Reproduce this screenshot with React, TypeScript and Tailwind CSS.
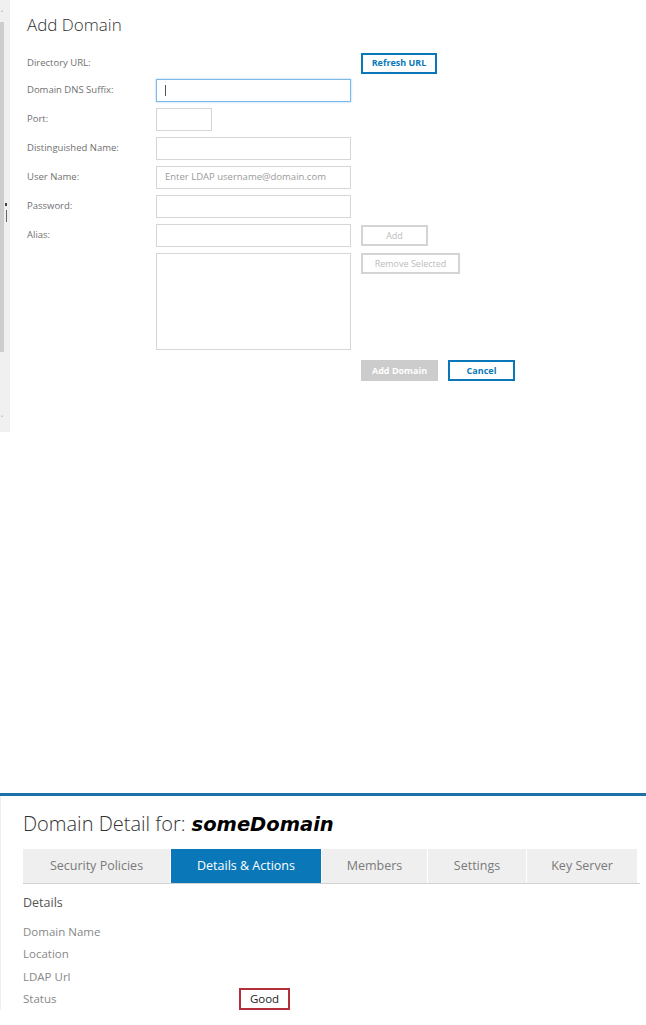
import React from "react";

const font = { fontFamily: "'Open Sans', Lato, sans-serif" };

const FormRow = ({
  label,
  children,
  extra,
}: {
  label: string;
  children?: React.ReactNode;
  extra?: React.ReactNode;
}) => (
  <div className="flex h-[23px] items-center">
    <div className="w-[129px] text-[9.5px] text-[#707070]">{label}</div>
    <div className="w-[195px]">{children}</div>
    {extra && <div className="ml-[10px]">{extra}</div>}
  </div>
);

const Input = ({
  className = "",
  placeholder,
  focused,
}: {
  className?: string;
  placeholder?: string;
  focused?: boolean;
}) => (
  <div
    className={`flex h-[23px] items-center border px-[8px] text-[9.5px] ${
      focused ? "border-[#7db9e8] shadow-[0_0_2px_#9cc9ee]" : "border-[#d6d6d6]"
    } ${className}`}
  >
    {focused && <span className="h-[11px] w-px bg-[#555]" />}
    {placeholder && <span className="text-[#9a9a9a]">{placeholder}</span>}
  </div>
);

const GhostButton = ({ children, w }: { children: React.ReactNode; w: string }) => (
  <div
    className={`flex h-[21px] items-center justify-center border-2 border-[#d4d4d4] text-[9px] text-[#bdbdbd] ${w}`}
  >
    {children}
  </div>
);

const BlueButton = ({ children, w }: { children: React.ReactNode; w: string }) => (
  <div
    className={`flex h-[21px] items-center justify-center border-2 border-[#0a78b8] text-[9px] font-bold text-[#0a78b8] ${w}`}
  >
    {children}
  </div>
);

function AddDomain() {
  return (
    <div className="flex h-[432px]">
      {/* scrollbar strip */}
      <div className="relative flex w-[10px] flex-col bg-[#f0f0f0]">
        <div className="flex h-[22px] items-start justify-start pl-[1px] pt-[10px] text-[7px] leading-none text-[#555]">
          ˄
        </div>
        <div className="h-[330px] w-[4px] bg-[#cdcdcd]" />
        <div className="flex flex-1 items-end pb-[10px] pl-[1px] text-[7px] leading-none text-[#555]">˅</div>
        <div className="absolute left-[5px] top-[203px] h-[3px] w-[2px] bg-[#444]" />
        <div className="absolute left-[6px] top-[210px] h-[12px] w-px bg-[#666]" />
      </div>

      <div className="flex flex-col pl-[17px] pt-[13px]" style={font}>
        <h1 className="text-[17px] leading-[24px] font-light text-[#333]">Add Domain</h1>

        <div className="mt-[16px] flex h-[20px] items-center">
          <div className="w-[334px] text-[9.5px] text-[#707070]">Directory URL:</div>
          <BlueButton w="w-[76px] h-[20px]">Refresh URL</BlueButton>
        </div>

        <div className="mt-[6px] flex flex-col gap-[6px]">
          <FormRow label="Domain DNS Suffix:">
            <Input focused />
          </FormRow>
          <FormRow label="Port:">
            <Input className="w-[56px]" />
          </FormRow>
          <FormRow label="Distinguished Name:">
            <Input />
          </FormRow>
          <FormRow label="User Name:">
            <Input placeholder="Enter LDAP username@domain.com" />
          </FormRow>
          <FormRow label="Password:">
            <Input />
          </FormRow>
          <FormRow label="Alias:" extra={<GhostButton w="w-[67px]">Add</GhostButton>}>
            <Input />
          </FormRow>
          <div className="flex">
            <div className="w-[129px]" />
            <div className="h-[97px] w-[195px] border border-[#d6d6d6]" />
            <div className="ml-[10px]">
              <GhostButton w="w-[99px]">Remove Selected</GhostButton>
            </div>
          </div>
        </div>

        <div className="mt-[10px] flex gap-[10px] pl-[334px]">
          <div className="flex h-[21px] w-[77px] items-center justify-center bg-[#cccccc] text-[9px] font-bold text-white">
            Add Domain
          </div>
          <BlueButton w="w-[67px]">Cancel</BlueButton>
        </div>
      </div>
    </div>
  );
}

const tabs = [
  { name: "Security Policies", w: "w-[147px]" },
  { name: "Details & Actions", w: "w-[150px]", active: true },
  { name: "Members", w: "w-[105px]" },
  { name: "Settings", w: "w-[98px]" },
  { name: "Key Server", w: "w-[110px]" },
];

function DomainDetail() {
  return (
    <div className="border-t-[3px] border-[#1c72a8]" style={font}>
      <div className="border-l border-[#eeeeee] pl-[22px] pt-[14px]">
        <div className="flex items-baseline text-[20px] leading-[28px]">
          <span className="font-light text-[#333]">Domain Detail for:</span>
          <span
            className="ml-[6px] text-[19.5px] font-bold italic text-black"
            style={{ fontFamily: "'DejaVu Sans', Verdana, sans-serif" }}
          >
            someDomain
          </span>
        </div>

        <div className="mt-[10px] flex w-[617px] gap-px border-b border-[#d2d2d2]">
          {tabs.map((t) => (
            <div
              key={t.name}
              className={`flex h-[34px] items-center justify-center text-[12.5px] ${t.w} ${
                t.active ? "bg-[#0a78b8] text-white" : "bg-[#efefef] text-[#7a7a7a]"
              }`}
            >
              {t.name}
            </div>
          ))}
        </div>

        <div className="mt-[10px] text-[12.5px] leading-[18px] text-[#555]">Details</div>
        <div className="mt-[8px] flex flex-col text-[11.5px] text-[#888]">
          <div className="flex h-[22.5px] items-center">Domain Name</div>
          <div className="flex h-[22.5px] items-center">Location</div>
          <div className="flex h-[22.5px] items-center">LDAP Url</div>
          <div className="flex h-[22.5px] items-center">
            <span className="w-[216px]">Status</span>
            <span className="flex h-[22px] w-[51px] items-center justify-center border-2 border-[#b2303b] text-[11.5px] text-[#222]">
              Good
            </span>
          </div>
        </div>
      </div>
    </div>
  );
}

export default function App() {
  return (
    <div className="h-[1025px] w-[646px] overflow-hidden bg-white">
      <AddDomain />
      <div className="h-[361px]" />
      <DomainDetail />
    </div>
  );
}
